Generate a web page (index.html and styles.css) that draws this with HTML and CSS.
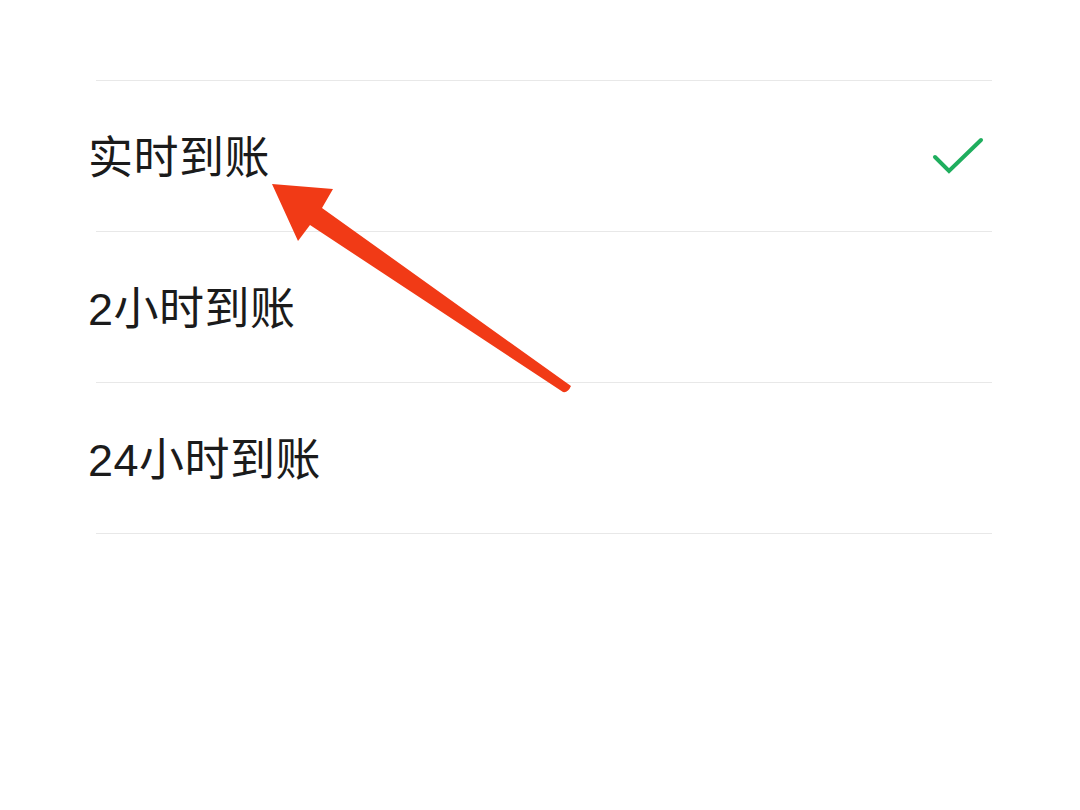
FILE: index.html
```html
<!DOCTYPE html>
<html>
    <head>
        <meta charset="utf-8" />
        <title>到账时间</title>
        <meta name="viewport" content="width=device-width, initial-scale=1.0" />
        <link rel="stylesheet" href="styles.css">
    </head>

    <body>
        <main class="page">
            <ul class="options">
                <li class="option is-selected">
                    <span class="option-label">实时到账</span>
                    <svg class="check" width="56" height="40" viewBox="0 0 56 40">
                        <path d="M5 21 L19 35 L51 4" />
                    </svg>
                </li>
                <li class="option">
                    <span class="option-label">2小时到账</span>
                </li>
                <li class="option">
                    <span class="option-label">24小时到账</span>
                </li>
            </ul>

            <svg class="annotation" width="1080" height="810" viewBox="0 0 1080 810">
                <path d="M272 184 L333 189 L322 208 L571 386 Q568 393 563 392 L310 225 L298 241 Z" />
            </svg>
        </main>
    </body>
</html>
```

FILE: styles.css
```css
html,
body {
    margin: 0;
    background: #fff;
}

body {
    font-family: "Liberation Sans", "Noto Sans CJK SC", sans-serif;
    color: #1b1b1b;
}

.page {
    position: relative;
    width: 1080px;
    height: 810px;
    overflow: hidden;
}

.options {
    list-style: none;
    margin: 80px 88px 0 96px;
    padding: 0;
    border-top: 1px solid #e8e8e8;
}

.option {
    display: flex;
    align-items: center;
    justify-content: space-between;
    height: 151px;
    padding: 4px 6px 0 0;
    box-sizing: border-box;
    border-bottom: 1px solid #e8e8e8;
}

.option-label {
    margin-left: -8px;
    font-size: 45px;
    line-height: 1;
    letter-spacing: 0.5px;
}

.check {
    margin-top: -4px;
}

.check path {
    fill: none;
    stroke: #1fae5e;
    stroke-width: 4;
    stroke-linecap: round;
    stroke-linejoin: miter;
}

.annotation {
    position: absolute;
    left: 0;
    top: 0;
    pointer-events: none;
}

.annotation path {
    fill: #f13a16;
}
```
